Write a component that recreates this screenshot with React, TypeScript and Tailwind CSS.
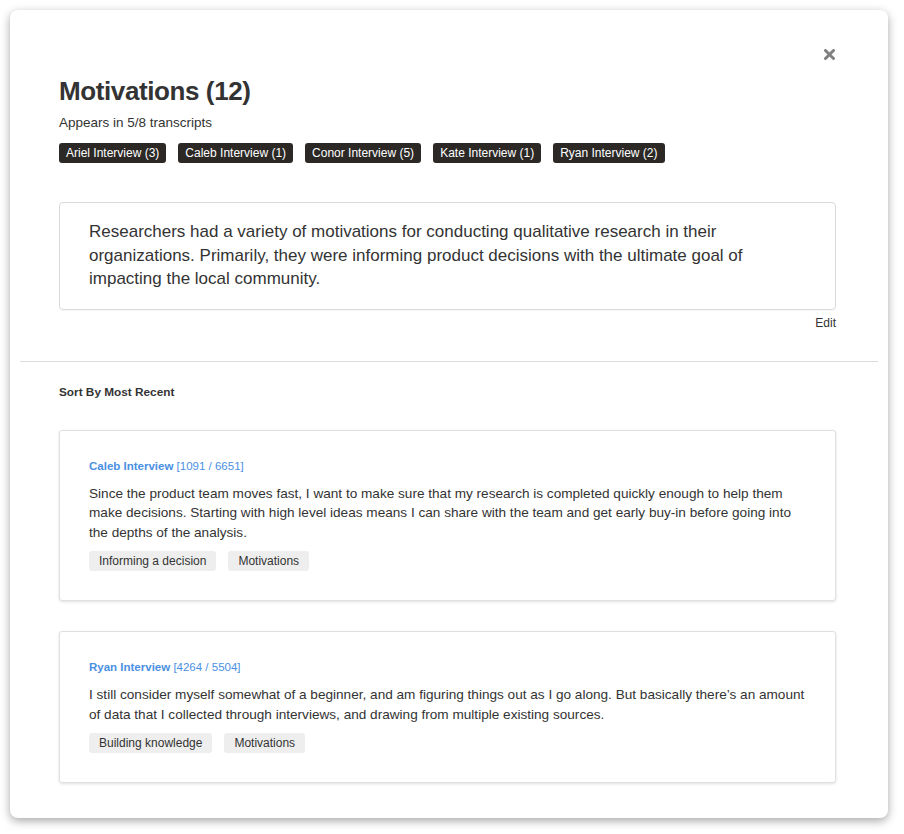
import React from "react";

const darkTags = [
  "Ariel Interview (3)",
  "Caleb Interview (1)",
  "Conor Interview (5)",
  "Kate Interview (1)",
  "Ryan Interview (2)",
];

const cards = [
  {
    name: "Caleb Interview",
    range: "[1091 / 6651]",
    lines: [
      "Since the product team moves fast, I want to make sure that my research is completed quickly enough to help them",
      "make decisions. Starting with high level ideas means I can share with the team and get early buy-in before going into",
      "the depths of the analysis.",
    ],
    tags: ["Informing a decision", "Motivations"],
  },
  {
    name: "Ryan Interview",
    range: "[4264 / 5504]",
    lines: [
      "I still consider myself somewhat of a beginner, and am figuring things out as I go along. But basically there\u2019s an amount",
      "of data that I collected through interviews, and drawing from multiple existing sources.",
    ],
    tags: ["Building knowledge", "Motivations"],
  },
];

export default function App() {
  return (
    <div
      className="min-h-[834px] bg-white pt-[10px] pl-[10px] text-[#333]"
      style={{ fontFamily: '"Liberation Sans", Arial, Helvetica, sans-serif' }}
    >
      <div className="relative w-[878px] rounded-[8px] bg-white shadow-[0_3px_10px_rgba(0,0,0,0.35)]">
        <button className="absolute top-[39px] right-[53px] w-[11px] h-[11px] flex items-center justify-center">
          <svg width="11" height="11" viewBox="0 0 11 11">
            <path d="M1.5 1.5 L9.5 9.5 M9.5 1.5 L1.5 9.5" stroke="#808080" strokeWidth="3" strokeLinecap="round" />
          </svg>
        </button>

        <div className="pl-[49px] pr-[52px] pt-[66px]">
          <h1 className="text-[26px] leading-[30px] font-bold tracking-[-0.4px] text-[#333]">
            Motivations (12)
          </h1>
          <p className="mt-[8px] text-[13.5px] leading-[18px] text-[#333]">Appears in 5/8 transcripts</p>
          <div className="mt-[11px] flex gap-[12px]">
            {darkTags.map((t) => (
              <span
                key={t}
                className="rounded-[3px] bg-[#2b2826] px-[7px] text-[12px] leading-[20px] text-white"
              >
                {t}
              </span>
            ))}
          </div>

          <div className="mt-[39px] rounded-[4px] border border-[#dadada] pl-[29px] pr-[24px] pt-[17px] pb-[18px] shadow-[0_1px_1px_rgba(0,0,0,0.04)]">
            <p className="text-[17px] leading-[23.5px] text-[#333]">
              Researchers had a variety of motivations for conducting qualitative research in their organizations.
              Primarily, they were informing product decisions with the ultimate goal of impacting the local community.
            </p>
          </div>
          <div className="mt-[5px] text-right text-[12px] leading-[16px] text-[#333]">Edit</div>
        </div>

        <div className="mt-[30px] mx-[10px] h-px bg-[#dddddd]" />

        <div className="pl-[49px] pr-[52px] pb-[35px]">
          <div className="mt-[22px] text-[11.8px] leading-[16px] font-bold text-[#333]">
            Sort By Most Recent
          </div>
          <div className="mt-[30px] flex flex-col gap-[30px]">
            {cards.map((c) => (
              <div
                key={c.name}
                className="rounded-[3px] border border-[#e0e0e0] bg-white pl-[29px] pr-[10px] pt-[27px] pb-[29px] shadow-[0_1px_3px_rgba(0,0,0,0.12)]"
              >
                <div className="text-[11.5px] leading-[16px] text-[#4a90e2]">
                  <span className="font-bold">{c.name}</span> <span>{c.range}</span>
                </div>
                <p className="mt-[10px] text-[13.6px] leading-[19.6px] text-[#333]">
                  {c.lines.map((l) => (
                    <span key={l} className="block whitespace-nowrap">
                      {l}
                    </span>
                  ))}
                </p>
                <div className="mt-[9px] flex gap-[12px]">
                  {c.tags.map((t) => (
                    <span key={t} className="rounded-[3px] bg-[#eeeeee] px-[10px] text-[12px] leading-[20px] text-[#333]">
                      {t}
                    </span>
                  ))}
                </div>
              </div>
            ))}
          </div>
        </div>
      </div>
    </div>
  );
}
